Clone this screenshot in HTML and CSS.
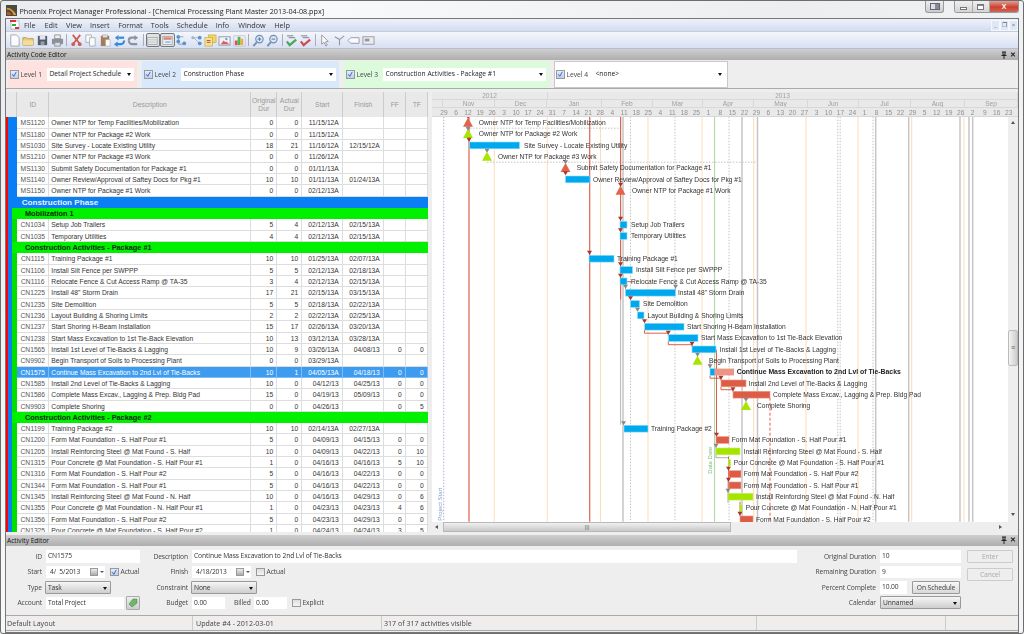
FILE: index.html
```html
<!DOCTYPE html>
<html lang="en">
<head>
<meta charset="utf-8">
<title>Phoenix Project Manager Professional</title>
<link rel="stylesheet" href="styles.css">
</head>
<body>
<div class="window">
  <header class="titlebar">
    <svg class="appicon" viewBox="0 0 12 12"><rect width="12" height="12" fill="#4a4a42"/><path d="M1 3c4 0 7 3 10 7v1H8C7 7 4 5 1 5z" fill="#e09a2b"/><path d="M1 7c2 0 4 1 5 4H1z" fill="#b5582a"/></svg>
    <span class="apptitle">Phoenix Project Manager Professional - [Chemical Processing Plant Master 2013-04-08.ppx]</span>
    <div class="capbtn extra"><svg viewBox="0 0 10 7"><rect x=".5" y=".5" width="9" height="6" fill="#dde" stroke="#667"/><rect x="5" y="1" width="4" height="5" fill="#889"/></svg></div>
    <div class="capgroup">
      <div class="cap"><i class="capmin"></i></div>
      <div class="cap"><i class="capmax"></i></div>
      <div class="cap close">X</div>
    </div>
  </header>
  <div class="frame">
    <nav class="menubar">
      <svg class="docicon" viewBox="0 0 10 10"><rect x="1" y="1" width="8" height="8" fill="#fff" stroke="#999" stroke-width=".6"/><rect x="0" y="0" width="6" height="2" fill="#d33"/><rect x="2" y="4" width="4" height="2" fill="#3a3"/><rect x="5" y="7" width="4" height="2" fill="#d33"/></svg>
      <span class="mi m-file">File</span><span class="mi m-edit">Edit</span><span class="mi m-view">View</span><span class="mi m-ins">Insert</span><span class="mi m-fmt">Format</span><span class="mi m-tool">Tools</span><span class="mi m-sch">Schedule</span><span class="mi m-info">Info</span><span class="mi m-win">Window</span><span class="mi">Help</span>
      <div class="mdi"><span>_</span><span>&#10064;</span><span>&times;</span></div>
    </nav>
    <div class="toolbar">
      <svg class="ti" viewBox="0 0 14 14"><path d="M3 1h6l3 3v9H3z" fill="#fff" stroke="#999"/></svg>
      <svg class="ti" viewBox="0 0 14 14"><path d="M1 4h4l1 1h6v7H1z" fill="#f0c860" stroke="#b08a30"/><path d="M1 7h11v5H1z" fill="#f6dc8c"/></svg>
      <svg class="ti" viewBox="0 0 14 14"><rect x="2" y="2" width="10" height="10" fill="#3c4450"/><rect x="4" y="2" width="6" height="4" fill="#dfe3ea"/><rect x="5" y="8" width="4" height="4" fill="#8a93a0"/></svg>
      <svg class="ti" viewBox="0 0 14 14"><rect x="4" y="1" width="6" height="4" fill="#eee" stroke="#888"/><rect x="1" y="5" width="12" height="6" rx="1" fill="#7b818a"/><rect x="4" y="9" width="6" height="4" fill="#ddd" stroke="#888"/></svg>
      <i class="sep"></i>
      <svg class="ti" viewBox="0 0 14 14"><path d="M3 1l7 9M11 1L4 10" stroke="#c9463c" stroke-width="2" fill="none"/><circle cx="3.500" cy="11" r="2" fill="#c9463c"/><circle cx="10.500" cy="11" r="2" fill="#c9463c"/></svg>
      <svg class="ti" viewBox="0 0 14 14"><path d="M2 1h6v8H2z" fill="#fff" stroke="#9aa"/><path d="M6 4h6v9H6z" fill="#fff" stroke="#9aa"/></svg>
      <svg class="ti" viewBox="0 0 14 14"><rect x="2" y="2" width="9" height="11" fill="#9c6a38"/><rect x="4" y="1" width="5" height="3" fill="#e0e0e0" stroke="#777" stroke-width=".5"/><path d="M7 6h5v7H7z" fill="#fff" stroke="#999" stroke-width=".6"/></svg>
      <svg class="ti" viewBox="0 0 14 14"><path d="M12 7a4 4 0 0 1-4 4H4" stroke="#1c78d8" stroke-width="2.400" fill="none"/><path d="M12 4H6" stroke="#1c78d8" stroke-width="2.400"/><path d="M6 1L2 4l4 3z M5 8l-4 3 4 3z" fill="#1c78d8"/></svg>
      <svg class="ti" viewBox="0 0 14 14"><path d="M2 7a4 4 0 0 0 4 4h5" stroke="#7d8590" stroke-width="2.400" fill="none"/><path d="M2 7a3 3 0 0 1 3-3h4" stroke="#7d8590" stroke-width="2.400" fill="none"/><path d="M8 1l4 3-4 3z" fill="#7d8590"/></svg>
      <i class="sep"></i>
      <div class="pressed"><svg class="ti" viewBox="0 0 14 14"><rect x="1" y="3" width="12" height="9" fill="#e8e8e8" stroke="#999"/><path d="M2 6h10M2 9h10" stroke="#bbb"/></svg></div>
      <div class="pressed"><svg class="ti" viewBox="0 0 14 14"><rect x="1" y="2" width="12" height="10" fill="#f4f4f4" stroke="#999"/><rect x="2" y="3" width="10" height="3" fill="#e46a5a"/><rect x="4" y="8" width="7" height="2" fill="#7ab8ec"/></svg></div>
      <svg class="ti" viewBox="0 0 14 14"><path d="M4 3h5M4 3v8h5" stroke="#668" fill="none" stroke-width=".7"/><circle cx="3.500" cy="3" r="2" fill="#3b86cf"/><circle cx="3.500" cy="8" r="2" fill="#3b86cf"/><circle cx="10" cy="10" r="2" fill="#3b86cf"/></svg>
      <svg class="ti" viewBox="0 0 14 14"><path d="M4 4h6M4 4l6 6" stroke="#889" fill="none" stroke-width=".7"/><circle cx="3" cy="4" r="1.600" fill="#9ab"/><circle cx="10.500" cy="4" r="2" fill="#3b86cf"/><circle cx="10.500" cy="10" r="2" fill="#3b86cf"/></svg>
      <svg class="ti" viewBox="0 0 14 14"><rect x="5" y="1" width="8" height="8" fill="#f7d24a" stroke="#b49024" stroke-width=".6"/><rect x="1" y="4" width="8" height="9" fill="#fbe17a" stroke="#b49024" stroke-width=".6"/><path d="M3 7h4M3 9h4" stroke="#a33"/></svg>
      <svg class="ti" viewBox="0 0 14 14"><rect x="1" y="3" width="12" height="9" fill="#f2f4f7" stroke="#889"/><path d="M3 11l3-4 2 2 1-1 3 3z" fill="#d64a3c"/><circle cx="9" cy="5.500" r="1.200" fill="#3b86cf"/></svg>
      <svg class="ti" viewBox="0 0 14 14"><rect x="1" y="2" width="12" height="11" fill="#eef" stroke="#99a" stroke-width=".5"/><rect x="2" y="7" width="3" height="5" fill="#d6402f"/><rect x="5" y="3" width="3" height="9" fill="#3cab3c"/><rect x="8" y="5" width="3" height="7" fill="#e9a820"/></svg>
      <i class="sep"></i>
      <svg class="ti" viewBox="0 0 14 14"><circle cx="8" cy="5.500" r="4" fill="#d8e6f6" stroke="#5c7fa8" stroke-width="1.200"/><path d="M5 9l-3.500 4" stroke="#5c7fa8" stroke-width="2"/><path d="M6 5.500h4M8 3.500v4" stroke="#33608f"/></svg>
      <svg class="ti" viewBox="0 0 14 14"><circle cx="8" cy="5.500" r="4" fill="#d8e6f6" stroke="#5c7fa8" stroke-width="1.200"/><path d="M5 9l-3.500 4" stroke="#5c7fa8" stroke-width="2"/><path d="M6 5.500h4" stroke="#33608f"/></svg>
      <i class="sep"></i>
      <svg class="ti" viewBox="0 0 14 14"><path d="M2 2h7M4 4h7" stroke="#667"/><path d="M2 8l3 4 7-6" stroke="#2f9e3a" stroke-width="2.400" fill="none"/></svg>
      <svg class="ti" viewBox="0 0 14 14"><path d="M2 2h7M4 4h7" stroke="#667"/><path d="M2 8l3 4 7-6" stroke="#c8343a" stroke-width="2.400" fill="none"/></svg>
      <i class="sep"></i>
      <svg class="ti" viewBox="0 0 14 14"><path d="M4 1v10l2.500-2 2 4 1.500-1-2-3.500 3-.5z" fill="#fff" stroke="#888"/></svg>
      <svg class="ti" viewBox="0 0 14 14"><path d="M2 3l5 3 5-4M7 6v6" stroke="#889" stroke-width="1.200" fill="none"/></svg>
      <svg class="ti" viewBox="0 0 14 14"><path d="M4 4h9v6H4L1 7z" fill="#fff" stroke="#889"/></svg>
      <svg class="ti" viewBox="0 0 14 14"><rect x="1" y="3" width="12" height="8" fill="#eee" stroke="#889"/><rect x="3" y="5" width="5" height="3" fill="#889"/></svg>
    </div>
    <div class="panelhead"><span>Activity Code Editor</span><div class="panelbtns"><svg class="pin" viewBox="0 0 6 8"><path d="M1 1h4M2 1v3h2V1M.5 4.500h5M3 4.500V8" stroke="#222" fill="none"/></svg><span class="px">&#10005;</span></div></div>
    <div class="levels">
      <div class="level lv1"><label class="chk on"><svg viewBox="0 0 8 8"><path d="M1.500 4l2 2.500L6.500 1" stroke="#2a55c8" stroke-width="1.100" fill="none"/></svg></label><span class="lvl">Level 1</span><div class="sel">Detail Project Schedule</div></div>
      <div class="level lv2"><label class="chk on"><svg viewBox="0 0 8 8"><path d="M1.500 4l2 2.500L6.500 1" stroke="#2a55c8" stroke-width="1.100" fill="none"/></svg></label><span class="lvl">Level 2</span><div class="sel">Construction Phase</div></div>
      <div class="level lv3"><label class="chk on"><svg viewBox="0 0 8 8"><path d="M1.500 4l2 2.500L6.500 1" stroke="#2a55c8" stroke-width="1.100" fill="none"/></svg></label><span class="lvl">Level 3</span><div class="sel">Construction Activities - Package #1</div></div>
      <div class="level lv4"><label class="chk on"><svg viewBox="0 0 8 8"><path d="M1.500 4l2 2.500L6.500 1" stroke="#2a55c8" stroke-width="1.100" fill="none"/></svg></label><span class="lvl">Level 4</span><div class="sel">&lt;none&gt;</div></div>
    </div>
    <main class="main">
      <section class="table">
        <div class="thead"><span>ID</span><span>Description</span><span>Original<br>Dur</span><span>Actual<br>Dur</span><span>Start</span><span>Finish</span><span>FF</span><span>TF</span></div>
        <div class="row ms"><span>MS1120</span><span>Owner NTP for Temp Facilities/Mobilization</span><span>0</span><span>0</span><span>11/15/12A</span><span></span><span></span><span></span></div>
        <div class="row ms"><span>MS1180</span><span>Owner NTP for Package #2 Work</span><span>0</span><span>0</span><span>11/15/12A</span><span></span><span></span><span></span></div>
        <div class="row ms"><span>MS1030</span><span>Site Survey - Locate Existing Utility</span><span>18</span><span>21</span><span>11/16/12A</span><span>12/15/12A</span><span></span><span></span></div>
        <div class="row ms"><span>MS1210</span><span>Owner NTP for Package #3 Work</span><span>0</span><span>0</span><span>11/26/12A</span><span></span><span></span><span></span></div>
        <div class="row ms"><span>MS1130</span><span>Submit Safety Documentation for Package #1</span><span>0</span><span>0</span><span>01/11/13A</span><span></span><span></span><span></span></div>
        <div class="row ms"><span>MS1140</span><span>Owner Review/Approval of Saftey Docs for Pkg #1</span><span>10</span><span>10</span><span>01/11/13A</span><span>01/24/13A</span><span></span><span></span></div>
        <div class="row ms"><span>MS1150</span><span>Owner NTP for Package #1 Work</span><span>0</span><span>0</span><span>02/12/13A</span><span></span><span></span><span></span></div>
        <div class="phase">Construction Phase</div>
        <div class="group">Mobilization 1</div>
        <div class="row"><span>CN1034</span><span>Setup Job Trailers</span><span>5</span><span>4</span><span>02/12/13A</span><span>02/15/13A</span><span></span><span></span></div>
        <div class="row"><span>CN1035</span><span>Temporary Utilities</span><span>4</span><span>4</span><span>02/12/13A</span><span>02/15/13A</span><span></span><span></span></div>
        <div class="group">Construction Activities - Package #1</div>
        <div class="row"><span>CN1115</span><span>Training Package #1</span><span>10</span><span>10</span><span>01/25/13A</span><span>02/07/13A</span><span></span><span></span></div>
        <div class="row"><span>CN1106</span><span>Install Silt Fence per SWPPP</span><span>5</span><span>5</span><span>02/12/13A</span><span>02/18/13A</span><span></span><span></span></div>
        <div class="row"><span>CN1116</span><span>Relocate Fence &amp; Cut Access Ramp @ TA-35</span><span>3</span><span>4</span><span>02/12/13A</span><span>02/15/13A</span><span></span><span></span></div>
        <div class="row"><span>CN1225</span><span>Install 48" Storm Drain</span><span>17</span><span>21</span><span>02/15/13A</span><span>03/15/13A</span><span></span><span></span></div>
        <div class="row"><span>CN1235</span><span>Site Demolition</span><span>5</span><span>5</span><span>02/18/13A</span><span>02/22/13A</span><span></span><span></span></div>
        <div class="row"><span>CN1236</span><span>Layout Building &amp; Shoring Limits</span><span>2</span><span>2</span><span>02/22/13A</span><span>02/25/13A</span><span></span><span></span></div>
        <div class="row"><span>CN1237</span><span>Start Shoring H-Beam Installation</span><span>15</span><span>17</span><span>02/26/13A</span><span>03/20/13A</span><span></span><span></span></div>
        <div class="row"><span>CN1238</span><span>Start Mass Excavation to 1st Tie-Back Elevation</span><span>10</span><span>13</span><span>03/12/13A</span><span>03/28/13A</span><span></span><span></span></div>
        <div class="row"><span>CN1565</span><span>Install 1st Level of Tie-Backs &amp; Lagging</span><span>10</span><span>9</span><span>03/26/13A</span><span>04/08/13</span><span>0</span><span>0</span></div>
        <div class="row"><span>CN9902</span><span>Begin Transport of Soils to Processing Plant</span><span>0</span><span>0</span><span>03/29/13A</span><span></span><span></span><span></span></div>
        <div class="row sel-row"><span>CN1575</span><span>Continue Mass Excavation to 2nd Lvl of Tie-Backs</span><span>10</span><span>1</span><span>04/05/13A</span><span>04/18/13</span><span>0</span><span>0</span></div>
        <div class="row"><span>CN1585</span><span>Install 2nd Level of Tie-Backs &amp; Lagging</span><span>10</span><span>0</span><span>04/12/13</span><span>04/25/13</span><span>0</span><span>0</span></div>
        <div class="row"><span>CN1586</span><span>Complete Mass Excav., Lagging &amp; Prep. Bldg Pad</span><span>15</span><span>0</span><span>04/19/13</span><span>05/09/13</span><span>0</span><span>0</span></div>
        <div class="row"><span>CN9903</span><span>Complete Shoring</span><span>0</span><span>0</span><span>04/26/13</span><span></span><span>0</span><span>5</span></div>
        <div class="group">Construction Activities - Package #2</div>
        <div class="row"><span>CN1199</span><span>Training Package #2</span><span>10</span><span>10</span><span>02/14/13A</span><span>02/27/13A</span><span></span><span></span></div>
        <div class="row"><span>CN1200</span><span>Form Mat Foundation - S. Half Pour #1</span><span>5</span><span>0</span><span>04/09/13</span><span>04/15/13</span><span>0</span><span>0</span></div>
        <div class="row"><span>CN1205</span><span>Install Reinforcing Steel @ Mat Found - S. Half</span><span>10</span><span>0</span><span>04/09/13</span><span>04/22/13</span><span>0</span><span>10</span></div>
        <div class="row"><span>CN1315</span><span>Pour Concrete @ Mat Foundation - S. Half Pour #1</span><span>1</span><span>0</span><span>04/16/13</span><span>04/16/13</span><span>5</span><span>10</span></div>
        <div class="row"><span>CN1316</span><span>Form Mat Foundation - S. Half Pour #2</span><span>5</span><span>0</span><span>04/16/13</span><span>04/22/13</span><span>0</span><span>0</span></div>
        <div class="row"><span>CN1344</span><span>Form Mat Foundation - S. Half Pour #1</span><span>5</span><span>0</span><span>04/16/13</span><span>04/22/13</span><span>0</span><span>0</span></div>
        <div class="row"><span>CN1345</span><span>Install Reinforcing Steel @ Mat Found - N. Half</span><span>10</span><span>0</span><span>04/16/13</span><span>04/29/13</span><span>0</span><span>6</span></div>
        <div class="row"><span>CN1355</span><span>Pour Concrete @ Mat Foundation - N. Half Pour #1</span><span>1</span><span>0</span><span>04/23/13</span><span>04/23/13</span><span>4</span><span>6</span></div>
        <div class="row"><span>CN1356</span><span>Form Mat Foundation - S. Half Pour #2</span><span>5</span><span>0</span><span>04/23/13</span><span>04/29/13</span><span>0</span><span>0</span></div>
        <div class="row"><span>CN1325</span><span>Pour Concrete @ Mat Foundation - S. Half Pour #2</span><span>1</span><span>0</span><span>04/24/13</span><span>04/24/13</span><span>3</span><span>5</span></div>
      </section>
      <section class="gantt">
        <div class="gh years"><span>2012</span><span>2013</span></div>
        <div class="gh months"><span></span><span>Nov</span><span>Dec</span><span>Jan</span><span>Feb</span><span>Mar</span><span>Apr</span><span>May</span><span>Jun</span><span>Jul</span><span>Aug</span><span>Sep</span></div>
        <div class="gh weeks"><span></span><span>29</span><span>6</span><span>12</span><span>19</span><span>26</span><span>3</span><span>10</span><span>17</span><span>24</span><span>31</span><span>7</span><span>14</span><span>21</span><span>28</span><span>4</span><span>11</span><span>18</span><span>25</span><span>4</span><span>11</span><span>18</span><span>25</span><span>1</span><span>8</span><span>15</span><span>22</span><span>29</span><span>6</span><span>13</span><span>20</span><span>27</span><span>3</span><span>10</span><span>17</span><span>24</span><span>1</span><span>8</span><span>15</span><span>22</span><span>29</span><span>5</span><span>12</span><span>19</span><span>26</span><span>2</span><span>9</span><span>16</span><span>23</span></div>
        <div class="gbody">
          <div class="gleft">
            <svg class="chart" viewBox="432 117.300 576 404.400" width="576" height="404.400">
              <defs>
                <path id="da" d="M-2.500-3h5L0 1z"/>
                <path id="tri" d="M0-5L5 4H-5z"/>
              </defs>
              <g class="v-or"><path d="M494.300 117V522M547.300 117V522M600.500 117V522M648 117V522M702 117V522M753.700 117V522M806 117V522M858 117V522M911.700 117V522M964 117V522"/></g>
              <g class="v-gray"><path d="M623 117V522M742 117V522M757.500 117V522M875.700 117V522M908.700 117V522M960 117V522M969 117V522M972.700 117V522"/></g>
              <g class="v-dot"><path d="M630.500 117V522M675 117V522M729 117V522M837.800 117V522M840.200 117V522M873 117V522"/><path d="M470 128.500H620M487 162.500H757"/></g>
              <path class="v-blue" d="M443.700 117V522"/>
              <path class="v-green" d="M714.600 117V522"/>
              <g class="v-red"><path d="M469 117V522M589.700 117V522M620.600 117V300"/></g>
              <path class="v-gray2" d="M620.600 300V425"/>
              <g class="dep">
                <path d="M644.500 330V333.500H668.300V336"/><path d="M668.300 341V345H692V347"/><path d="M716.500 350V436"/><path d="M710 376V378.500H721V381"/><path d="M721 387V390H733V392"/><path d="M728.500 457V492"/><path d="M740 502V516"/>
                <path class="dash" d="M770 398V521"/>
                <path d="M627 282H632"/><path d="M627 258V262"/>
              </g>
              <g class="dep-g"><path d="M716 445V458H728"/><path d="M728 480V503"/><path d="M625.500 285V290"/><path d="M675.500 285V291"/><path d="M710 363V369"/><path d="M697.500 352V357"/></g>
              <g class="bar-b">
                <rect x="469.500" y="142.300" width="50" height="6.800"/><rect x="565.500" y="176.300" width="24.500" height="6.800"/><rect x="620" y="221.600" width="7" height="6.800"/><rect x="620" y="232.900" width="7" height="6.800"/><rect x="589" y="255.600" width="25" height="6.800"/><rect x="620" y="266.900" width="12.500" height="6.800"/><rect x="620" y="278.300" width="7" height="6.800"/><rect x="625.500" y="289.600" width="50" height="6.800"/><rect x="630.500" y="300.900" width="9" height="6.800"/><rect x="637.500" y="312.300" width="6.500" height="6.800"/><rect x="644.700" y="323.600" width="39.300" height="6.800"/><rect x="668.500" y="334.900" width="29.500" height="6.800"/><rect x="692" y="346.300" width="24" height="6.800"/><rect x="710" y="368.900" width="5" height="6.800"/><rect x="624" y="425.600" width="24" height="6.800"/>
              </g>
              <rect class="bar-s" x="714.600" y="368.900" width="19.400" height="6.800"/>
              <g class="bar-r">
                <rect x="721" y="380.300" width="25" height="6.800"/><rect x="733" y="391.600" width="37" height="6.800"/><rect x="716" y="436.900" width="13" height="6.800"/><rect x="729" y="471" width="12" height="6.800"/><rect x="729" y="482.300" width="12" height="6.800"/><rect x="740" y="516.300" width="13" height="6.800"/>
              </g>
              <g class="bar-g">
                <rect x="716" y="448.300" width="24" height="6.800"/><rect x="728.500" y="459.600" width="2" height="6.800"/><rect x="728" y="493.600" width="25" height="6.800"/><rect x="740" y="504.900" width="2" height="6.800"/>
              </g>
              <g class="ms-r"><use href="#tri" x="468" y="123"/><use href="#tri" x="565.500" y="168.300"/><use href="#tri" x="620.500" y="191"/></g>
              <g class="ms-g"><use href="#tri" x="468" y="134.300"/><use href="#tri" x="487" y="157"/><use href="#tri" x="697.500" y="361"/><use href="#tri" x="746" y="406.300"/></g>
              <g class="ar-r"><use href="#da" x="468" y="118"/><use href="#da" x="469" y="141"/><use href="#da" x="565.500" y="174.500"/><use href="#da" x="620.500" y="186"/><use href="#da" x="620.500" y="220"/><use href="#da" x="620.500" y="231.500"/><use href="#da" x="589.500" y="254"/><use href="#da" x="620.500" y="265.500"/><use href="#da" x="620.500" y="277"/><use href="#da" x="630.500" y="299.500"/><use href="#da" x="644.500" y="322.500"/><use href="#da" x="668.300" y="334"/><use href="#da" x="692" y="345"/><use href="#da" x="721" y="379"/><use href="#da" x="733" y="390.500"/><use href="#da" x="716.500" y="436"/><use href="#da" x="728.500" y="470"/><use href="#da" x="728.500" y="481"/><use href="#da" x="740" y="515"/></g>
              <g class="ar-g"><use href="#da" x="468" y="130"/><use href="#da" x="487" y="152"/><use href="#da" x="565.500" y="163.500"/><use href="#da" x="625.500" y="288"/><use href="#da" x="675.500" y="288"/><use href="#da" x="637.500" y="311"/><use href="#da" x="697.500" y="356"/><use href="#da" x="710" y="367.500"/><use href="#da" x="746" y="401"/><use href="#da" x="623.500" y="424.500"/><use href="#da" x="716" y="447"/><use href="#da" x="728" y="492"/></g>
              <g class="lab">
                <text x="478.700" y="125.500">Owner NTP for Temp Facilities/Mobilization</text>
                <text x="478.700" y="136.800">Owner NTP for Package #2 Work</text>
                <text x="524" y="148.200">Site Survey - Locate Existing Utility</text>
                <text x="498" y="159.500">Owner NTP for Package #3 Work</text>
                <text x="576.700" y="170.800">Submit Safety Documentation for Package #1</text>
                <text x="593" y="182.200">Owner Review/Approval of Saftey Docs for Pkg #1</text>
                <text x="632" y="193.500">Owner NTP for Package #1 Work</text>
                <text x="631" y="227.500">Setup Job Trailers</text>
                <text x="631" y="238.800">Temporary Utilities</text>
                <text x="617" y="261.500">Training Package #1</text>
                <text x="636" y="272.800">Install Silt Fence per SWPPP</text>
                <text x="631" y="284.200">Relocate Fence &amp; Cut Access Ramp @ TA-35</text>
                <text x="678" y="295.500">Install 48" Storm Drain</text>
                <text x="643" y="306.800">Site Demolition</text>
                <text x="647.500" y="318.200">Layout Building &amp; Shoring Limits</text>
                <text x="687" y="329.500">Start Shoring H-Beam Installation</text>
                <text x="701" y="340.800">Start Mass Excavation to 1st Tie-Back Elevation</text>
                <text x="719.700" y="352.200">Install 1st Level of Tie-Backs &amp; Lagging</text>
                <text x="709" y="363.500">Begin Transport of Soils to Processing Plant</text>
                <text class="lab-b" x="736.700" y="374.800">Continue Mass Excavation to 2nd Lvl of Tie-Backs</text>
                <text x="748.700" y="386.200">Install 2nd Level of Tie-Backs &amp; Lagging</text>
                <text x="773" y="397.500">Complete Mass Excav., Lagging &amp; Prep. Bldg Pad</text>
                <text x="757" y="408.800">Complete Shoring</text>
                <text x="651" y="431.500">Training Package #2</text>
                <text x="731.700" y="442.800">Form Mat Foundation - S. Half Pour #1</text>
                <text x="743.700" y="454.200">Install Reinforcing Steel @ Mat Found - S. Half</text>
                <text x="733.700" y="465.500">Pour Concrete @ Mat Foundation - S. Half Pour #1</text>
                <text x="743.700" y="476.800">Form Mat Foundation - S. Half Pour #2</text>
                <text x="743.700" y="488.200">Form Mat Foundation - S. Half Pour #1</text>
                <text x="756" y="499.500">Install Reinforcing Steel @ Mat Found - N. Half</text>
                <text x="745.700" y="510.800">Pour Concrete @ Mat Foundation - N. Half Pour #1</text>
                <text x="756" y="522.200">Form Mat Foundation - S. Half Pour #2</text>
              </g>
              <text class="rot-g" transform="translate(712 474) rotate(-90)">Data Date</text>
              <text class="rot-b" transform="translate(442 521) rotate(-90)">Project Start</text>
            </svg>
            <div class="hscroll"><i class="arrow-l"></i><div class="hthumb"><span>|||</span></div><i class="arrow-r"></i></div>
          </div>
          <div class="vscroll"><i class="arrow-u"></i><div class="vthumb"><span>&equiv;</span></div><i class="arrow-d"></i></div>
        </div>
      </section>
    </main>
    <div class="panelhead ed"><span>Activity Editor</span><div class="panelbtns"><svg class="pin" viewBox="0 0 6 8"><path d="M1 1h4M2 1v3h2V1M.5 4.500h5M3 4.500V8" stroke="#222" fill="none"/></svg><span class="px">&#10005;</span></div></div>
    <div class="editor">
      <label class="fl">ID</label><div class="fc"><div class="inp w-id">CN1575</div></div>
      <label class="fl">Description</label><div class="fc"><div class="inp grow">Continue Mass Excavation to 2nd Lvl of Tie-Backs</div></div>
      <label class="fl">Original Duration</label><div class="fc"><div class="inp grow">10</div></div>
      <div class="fc"><button class="btn off" type="button">Enter</button></div>

      <label class="fl">Start</label><div class="fc"><div class="inp date"><span>4/&nbsp;&nbsp;5/2013</span><i class="cal"></i></div><label class="chk on c-a"><svg viewBox="0 0 8 8"><path d="M1.500 4l2 2.500L6.500 1" stroke="#2a55c8" stroke-width="1.100" fill="none"/></svg></label><span class="ck">Actual</span></div>
      <label class="fl">Finish</label><div class="fc"><div class="inp date"><span>4/18/2013</span><i class="cal"></i></div><label class="chk c-a"></label><span class="ck">Actual</span></div>
      <label class="fl">Remaining Duration</label><div class="fc"><div class="inp grow">9</div></div>
      <div class="fc"><button class="btn off low" type="button">Cancel</button></div>

      <label class="fl">Type</label><div class="fc"><div class="drop w-drop">Task</div></div>
      <label class="fl">Constraint</label><div class="fc"><div class="drop w-drop">None</div></div>
      <label class="fl">Percent Complete</label><div class="fc"><div class="inp w-pct">10.00</div><button class="btn on-s" type="button">On Schedule</button></div>
      <div class="fc"></div>

      <label class="fl">Account</label><div class="fc"><div class="inp w-acc">Total Project</div><button class="btn tag" type="button"><svg viewBox="0 0 10 10"><path d="M1 6l4-5h4v4l-5 4z" fill="#6fb56a" stroke="#4b8f49" stroke-width=".6"/></svg></button></div>
      <label class="fl">Budget</label><div class="fc"><div class="inp w-num">0.00</div><span class="billed">Billed</span><div class="inp w-num">0.00</div><label class="chk c-a"></label><span class="ck">Explicit</span></div>
      <label class="fl">Calendar</label><div class="fc"><div class="drop grow">Unnamed</div></div>
      <div class="fc"></div>
    </div>
    <footer class="status"><span class="st1">Default Layout</span><span class="st2">Update #4 - 2012-03-01</span><span class="st3">317 of 317 activities visible</span><span class="st4"></span><span class="st5"></span></footer>
  </div>
</div>
</body>
</html>
```
FILE: styles.css
```css
* { box-sizing: border-box; }
html, body { margin: 0; padding: 0; height: 634px; overflow: hidden; background: #e8eaec; }
body { font-family: "Open Sans", "Liberation Sans", sans-serif; color: #333; }
svg { display: block; }
.window { width: 1024px; height: 634px; display: flex; flex-direction: column; border: 1px solid #6d6d6d; border-radius: 3px; background: linear-gradient(115deg, #e9ebee 0%, #f8f9fa 25%, #eceef0 60%, #f4f5f6 100%); overflow: hidden; filter: blur(.3px); }

.titlebar { height: 17px; flex: none; display: flex; align-items: center; padding-left: 5px; position: relative; }
.appicon { width: 11px; height: 11px; margin-top: 2px; }
.apptitle { font-size: 7.190px; margin-left: 2.500px; margin-top: 3px; color: #222; white-space: nowrap; }
.capbtn.extra { margin-left: auto; width: 19px; height: 12px; border: 1px solid #9a9a9a; border-top: 0; border-radius: 0 0 3px 3px; background: linear-gradient(#eee, #ccc); display: flex; align-items: center; justify-content: center; align-self: flex-start; }
.capbtn.extra svg { width: 10px; height: 7px; }
.capgroup { display: flex; margin-left: 10px; margin-right: 4px; align-self: flex-start; height: 12px; border: 1px solid #9a9a9a; border-top: 0; border-radius: 0 0 3px 3px; overflow: hidden; }
.cap { width: 17.500px; background: linear-gradient(#f0f0f0, #d4d4d4); border-right: 1px solid #aaa; display: flex; align-items: center; justify-content: center; }
.capmin { width: 7px; height: 3px; border: 1px solid #777; margin-top: 3px; background: #fff; }
.capmax { width: 7px; height: 6px; border: 1px solid #777; background: #fff; box-shadow: inset 0 1px 0 #888; }
.cap.close { width: 28px; border: 0; background: linear-gradient(#e0a096, #d0402e 55%, #c8685a); color: #fff; font: bold 7px "Liberation Sans", sans-serif; }

.frame { margin-left: 4px; width: 1014px; height: 615px; flex: none; border: 1px solid #777; background: #eee; display: flex; flex-direction: column; overflow: hidden; }
.menubar { height: 13px; flex: none; display: flex; align-items: center; background: linear-gradient(#eef1f9, #d4dcf0); border-bottom: 1px solid #c4cbdc; font-size: 7.300px; color: #333; padding-left: 4px; }
.docicon { width: 10px; height: 10px; margin-right: 4px; }
.mi { margin-right: 7px; white-space: nowrap; }
.m-file { margin-right: 9px; }
.m-edit { margin-right: 8.500px; }
.m-view { margin-right: 8px; }
.m-ins { margin-right: 8.500px; }
.m-fmt { margin-right: 8px; }
.m-tool { margin-right: 8px; }
.m-sch { margin-right: 8px; }
.m-info { margin-right: 9px; }
.m-win { margin-right: 8.500px; }
.mdi { margin-left: auto; display: flex; height: 11px; }
.mdi span { width: 9px; height: 11px; background: #dfe8f6; border: 1px solid #f4f7fc; font-size: 6px; line-height: 9px; text-align: center; color: #667; }

.toolbar { height: 17px; flex: none; display: flex; align-items: center; padding-left: 1px; background: linear-gradient(#f4f6fb, #d8e0f3); border-bottom: 1px solid #b8bfcc; }
.ti { width: 13px; height: 13px; margin: 0 .700px; flex: none; opacity: .85; }
.sep { width: 1px; height: 12px; background: #aab; margin: 0 1.800px; flex: none; }
.pressed { width: 14.500px; height: 14.500px; border: 1px solid #777; border-radius: 2px; background: #dfe3ea; flex: none; display: flex; align-items: center; justify-content: center; }
.pressed .ti { width: 11px; height: 11px; margin: 0; }

.panelhead { height: 11px; flex: none; display: flex; align-items: center; justify-content: space-between; padding: 0 2px 0 1px; background: linear-gradient(#cfcfcf, #aeaeae); font-size: 6.600px; color: #111; }
.panelhead.ed { margin-top: 3px; }
.panelbtns { display: flex; align-items: center; gap: 3px; }
.pin { width: 6px; height: 8px; }
.px { font: bold 7px "Liberation Sans", sans-serif; color: #222; }

.levels { height: 29px; flex: none; display: flex; gap: 5px; padding: 1px 2px; background: #eee; border-bottom: 1px solid #aaa; font-size: 6.700px; }
.level { height: 27px; display: flex; align-items: center; padding-left: 2px; }
.lv1 { width: 129px; background: #fde2e0; }
.lv2 { width: 197px; background: #d9e9fb; }
.lv3 { width: 205px; background: #dcfadc; }
.lv4 { width: 174px; background: #fff; outline: 1px solid #c8c8c8; outline-offset: -1px; }
.chk { width: 8.500px; height: 8.500px; flex: none; border: 1px solid #999; background: linear-gradient(#e4ecf8, #bcd0ee); display: block; }
.chk svg { width: 100%; height: 100%; }
.chk:not(.on) { background: linear-gradient(#ddd, #f4f4f4); }
.lvl { margin-left: 2px; width: 26px; flex: none; color: #444; }
.sel { flex: 1; height: 12.500px; margin-right: 3px; background: #fff; line-height: 12px; padding-left: 3px; position: relative; color: #222; white-space: nowrap; }
.sel::after, .drop::after { content: ""; position: absolute; right: 3px; top: 5px; border: 2.500px solid transparent; border-top: 3px solid #111; border-bottom: 0; }

.main { height: 439.700px; flex: none; margin-top: 3px; display: flex; background: #eee; overflow: hidden; }
.table { width: 422px; flex: none; overflow: hidden; font-family: "Liberation Sans", Arial, sans-serif; font-size: 6.700px; color: #333; }
.thead { height: 25.300px; display: grid; grid-template-columns: 11.300px 32px 202px 26px 25px 41px 41px 22px 22px; background: #e9e9e9; color: #999; font-size: 6.800px; line-height: 7.500px; text-align: center; }
.thead::before { content: ""; border-right: 1px solid #ccc; }
.thead span { display: flex; align-items: center; justify-content: center; border-right: 1px solid #ccc; }
.row, .phase, .group { height: 11.333px; white-space: nowrap; }
.row { display: grid; grid-template-columns: 32px 202px 26px 25px 41px 41px 22px 22px; padding-left: 11.300px; background: linear-gradient(to right, #ff0000 2px, #0a7ff5 2px 6px, #00e000 6px 11.300px, #fff 11.300px); }
.row.ms { background: linear-gradient(to right, #ff0000 2px, #0a7ff5 2px 11.300px, #fff 11.300px); }
.row span { border-right: 1px solid #ddd; border-bottom: 1px solid #ddd; line-height: 11.400px; padding: 0 2px; text-align: right; overflow: hidden; }
.row span:nth-child(1) { text-align: center; padding: 0; color: #555; }
.row span:nth-child(2) { text-align: left; }
.row span:nth-child(3), .row span:nth-child(4) { padding-right: 3px; }
.row span:nth-child(5), .row span:nth-child(6), .row span:nth-child(7), .row span:nth-child(8) { padding-right: 3.500px; }
.row.sel-row span { background: #3d9bf0; color: #fff; border-color: #7fbcf4; }
.phase { background: linear-gradient(to right, #ff0000 2px, #0a7ff5 2px); color: #e6f2ff; font-weight: bold; font-size: 8.100px; line-height: 11.800px; padding-left: 15.700px; }
.group { background: linear-gradient(to right, #ff0000 2px, #0a7ff5 2px 6px, #00f000 6px); color: #0a2a0a; font-weight: bold; font-size: 7.350px; line-height: 11.800px; padding-left: 19px; }

.gantt { width: 590px; margin-left: 0; padding-left: 4px; flex: none; display: flex; flex-direction: column; min-width: 0; }
.gh { display: grid; background: #e9e9e9; color: #a0a0a0; font-family: "Liberation Sans", Arial, sans-serif; font-size: 6.600px; text-align: center; border-bottom: 1px solid #d8d8d8; flex: none; }
.gh span { border-right: 1px solid #d8d8d8; overflow: hidden; white-space: nowrap; }
.years { height: 8px; line-height: 7.500px; grid-template-columns: 116px 470px; }
.months { height: 8px; line-height: 7.500px; grid-template-columns: 11px 52px 52px 55px 51px 50px 51px 54px 51px 52px 54px 53px; }
.weeks { height: 9.300px; line-height: 9px; grid-template-columns: 6px repeat(48, 12.020px); color: #909090; }
.weeks span { border-right: 0; }
.gbody { flex: 1; min-height: 0; display: flex; }
.gleft { width: 576px; flex: none; display: flex; flex-direction: column; }
.chart { background: #fff; flex: none; font-family: "Liberation Sans", Arial, sans-serif; }
.v-or path { stroke: #ffdcb8; stroke-width: 1; fill: none; }
.v-gray path { stroke: #c6c6c6; stroke-width: 1.500; fill: none; }
.v-dot path { stroke: #aaa; stroke-width: .7; stroke-dasharray: 1.500 1.500; fill: none; }
.v-blue { stroke: #8ea0cc; stroke-width: .8; stroke-dasharray: 1.500 1.500; fill: none; }
.v-green { stroke: #a8d8a0; stroke-width: 1; fill: none; }
.v-red path { stroke: #e2634c; stroke-width: 1.200; fill: none; }
.v-gray2 { stroke: #b5b5b5; stroke-width: 1; fill: none; }
.dep path { stroke: #e04c36; stroke-width: .9; fill: none; }
.dep .dash { stroke-dasharray: 3 2; }
.dep-g path { stroke: #9a9a9a; stroke-width: .8; fill: none; }
.bar-b rect { fill: #00a9ee; stroke: #8fdcff; stroke-width: .6; }
.bar-s { fill: #ec9486; }
.bar-r rect { fill: #dd5c46; stroke: #ee9a8c; stroke-width: .6; }
.bar-g rect { fill: #a4e400; stroke: #c8f060; stroke-width: .6; }
.ms-r { fill: #e2634c; }
.ms-g { fill: #a8e600; }
.ar-r { fill: #a5382a; }
.ar-g { fill: #888; }
.lab text { font-size: 6.680px; fill: #333; }
.lab .lab-b { font-weight: bold; fill: #222; font-size: 6.900px; }
.rot-g { font-size: 6px; fill: #7dbb7d; }
.rot-b { font-size: 6px; fill: #8ea0cc; }

.hscroll { height: 10px; flex: none; display: flex; align-items: center; background: #eee; position: relative; padding-left: 11px; }
.hthumb { width: 288px; height: 10px; background: linear-gradient(#f0f0f0, #c8c8c8); border: 1px solid #b8b8b8; text-align: center; font: 6px/8px "Liberation Sans", sans-serif; color: #666; }
.arrow-l, .arrow-r, .arrow-u, .arrow-d { position: absolute; border: 2px solid transparent; }
.arrow-l { left: 3px; top: 3px; border-right: 3px solid #555; border-left: 0; }
.arrow-r { right: 6px; top: 3px; border-left: 3px solid #555; border-right: 0; }
.vscroll { width: 10px; flex: none; background: #eee; position: relative; padding-top: 212.700px; }
.vthumb { width: 10px; height: 36px; background: linear-gradient(to right, #f4f4f4, #ccc); border: 1px solid #bbb; border-radius: 2px; text-align: center; font: 7px/34px "Liberation Sans", sans-serif; color: #666; }
.arrow-u { left: 3px; top: 4px; border-bottom: 3px solid #555; border-top: 0; }
.arrow-d { left: 3px; top: 396px; border-top: 3px solid #555; border-bottom: 0; }

.editor { height: 70px; flex: none; display: grid; grid-template-columns: 36px 100px 38px 605px 75px 81px 48px; grid-auto-rows: 15.500px; column-gap: 4px; padding-top: 3px; background: #eee; border-bottom: 1px solid #aaa; font-size: 6.700px; letter-spacing: -.1px; color: #444; }
.fl { text-align: right; line-height: 15px; white-space: nowrap; display: block; }
.fc { display: flex; align-items: center; min-width: 0; }
.inp { height: 12.500px; background: #fff; line-height: 12.500px; padding-left: 2px; color: #333; white-space: nowrap; flex: none; }
.inp.grow, .drop.grow { flex: 1; }
.w-id { width: 94px; }
.date { width: 59px; display: flex; padding-left: 4px; gap: 0; }
.date span { width: 40px; }
.cal { width: 8px; height: 8px; margin-top: 2px; background: linear-gradient(#eee, #aaa); border: 1px solid #999; position: relative; }
.cal::after { content: ""; position: absolute; left: 8.500px; top: 2px; border: 2px solid transparent; border-top: 2.500px solid #556; border-bottom: 0; }
.c-a { margin-left: 5px; }
.ck { margin-left: 2px; color: #444; }
.drop { height: 13px; position: relative; background: linear-gradient(#f6f6f6, #cecece); border: 1px solid #999; border-radius: 1px; line-height: 11px; padding-left: 2px; color: #333; flex: none; }
.w-drop { width: 66px; margin-left: -1px; }
.w-pct { width: 27px; }
.w-acc { width: 78px; }
.w-num { width: 33px; }
.billed { margin-left: 9px; width: 20px; flex: none; }
.btn { font: inherit; letter-spacing: inherit; padding: 0; height: 13px; border: 1px solid #bbb; border-radius: 1px; background: linear-gradient(#f6f6f6, #e4e4e4); color: #444; }
.btn.off { width: 46px; margin-left: 2px; color: #aaa; background: #eee; border-color: #ccc; }
.btn.low { position: relative; top: 2.500px; }
.btn.on-s { width: 48px; margin-left: 5px; border-color: #999; background: linear-gradient(#f8f8f8, #d8d8d8); height: 13.500px; }
.btn.tag { width: 14px; height: 14px; margin-left: 2px; background: linear-gradient(#eee, #ccc); border-color: #aaa; display: flex; align-items: center; justify-content: center; }
.btn.tag svg { width: 10px; height: 10px; }

.status { height: 15px; flex: none; display: flex; background: #f0eded; border-bottom: 1px solid #aaa; font-size: 7.100px; color: #444; line-height: 15px; }
.status span { padding-left: 1px; border-right: 1px solid #ccc; white-space: nowrap; }
.st1 { width: 187px; }
.st2 { width: 189px; padding-left: 3px !important; }
.st3 { width: 375px; padding-left: 2px !important; }
.st4 { width: 189px; }
.st5 { flex: 1; border-right: 0 !important; }
```
